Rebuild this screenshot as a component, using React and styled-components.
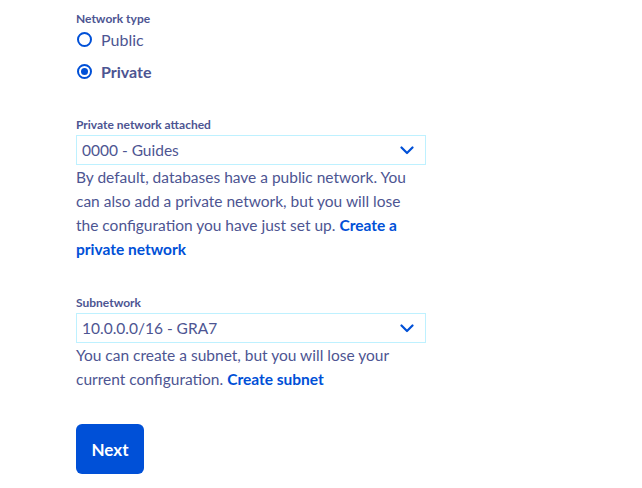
import React from "react";
import styled, { createGlobalStyle } from "styled-components";

const Global = createGlobalStyle`
  body { margin: 0; background: #fff; font-family: "Source Sans Pro", Lato, "Open Sans", sans-serif; color: #4d5592; }
`;

const Page = styled.div`
  padding: 11px 0 0 76px;
  width: 350px;
  display: flex;
  flex-direction: column;
`;

const Label = styled.div`
  font-size: 12px;
  font-weight: 700;
  line-height: 16px;
  color: #4d5592;
  margin-top: ${p => p.$mt || 0}px;
`;

const RadioRow = styled.label`
  display: flex;
  align-items: center;
  gap: 9px;
  height: 24px;
  margin-top: ${p => p.$mt || 0}px;
  font-size: 16px;
  font-weight: ${p => (p.$checked ? 700 : 400)};
  color: #4d5592;
`;

const RadioCircle = styled.span`
  width: 15px;
  height: 15px;
  box-sizing: border-box;
  border: 2px solid #0050d7;
  border-radius: 50%;
  display: flex;
  align-items: center;
  justify-content: center;
  margin-left: 1px;
  &::after {
    content: "";
    width: 7px;
    height: 7px;
    border-radius: 50%;
    background: ${p => (p.$checked ? "#0050d7" : "transparent")};
  }
`;

const Select = styled.div`
  margin-top: 2px;
  height: 30px;
  box-sizing: border-box;
  border: 1px solid #bef1ff;
  display: flex;
  align-items: center;
  justify-content: space-between;
  padding: 0 11px 0 5px;
  font-size: 15.5px;
  color: #4d5592;
`;

const Help = styled.p`
  margin: 0;
  font-size: 15.5px;
  line-height: 24px;
  color: #4d5592;
`;

const Link = styled.a`
  color: #0050d7;
  font-weight: 700;
  text-decoration: none;
`;

const Button = styled.button`
  margin-top: 33px;
  width: 68px;
  height: 50px;
  border: none;
  border-radius: 6px;
  background: #0050d7;
  color: #fff;
  font-family: inherit;
  font-size: 17px;
  font-weight: 700;
  cursor: pointer;
`;

const Chevron = () => (
  <svg width="14" height="9" viewBox="0 0 14 9" fill="none">
    <path d="M1.5 1.5 L7 7 L12.5 1.5" stroke="#0050d7" strokeWidth="2.2" strokeLinecap="round" strokeLinejoin="round" />
  </svg>
);

export default function App() {
  return (
    <>
      <Global />
      <Page>
        <Label>Network type</Label>
        <RadioRow $mt={0}>
          <RadioCircle />
          Public
        </RadioRow>
        <RadioRow $mt={8} $checked>
          <RadioCircle $checked />
          Private
        </RadioRow>
        <Label $mt={34}>Private network attached</Label>
        <Select>
          <span>0000 - Guides</span>
          <Chevron />
        </Select>
        <Help>
          By default, databases have a public network. You can also add a private network, but you will lose the configuration you have just set up. <Link href="#">Create a private network</Link>
        </Help>
        <Label $mt={34}>Subnetwork</Label>
        <Select>
          <span>10.0.0.0/16 - GRA7</span>
          <Chevron />
        </Select>
        <Help>
          You can create a subnet, but you will lose your current configuration. <Link href="#">Create subnet</Link>
        </Help>
        <div>
          <Button>Next</Button>
        </div>
      </Page>
    </>
  );
}
